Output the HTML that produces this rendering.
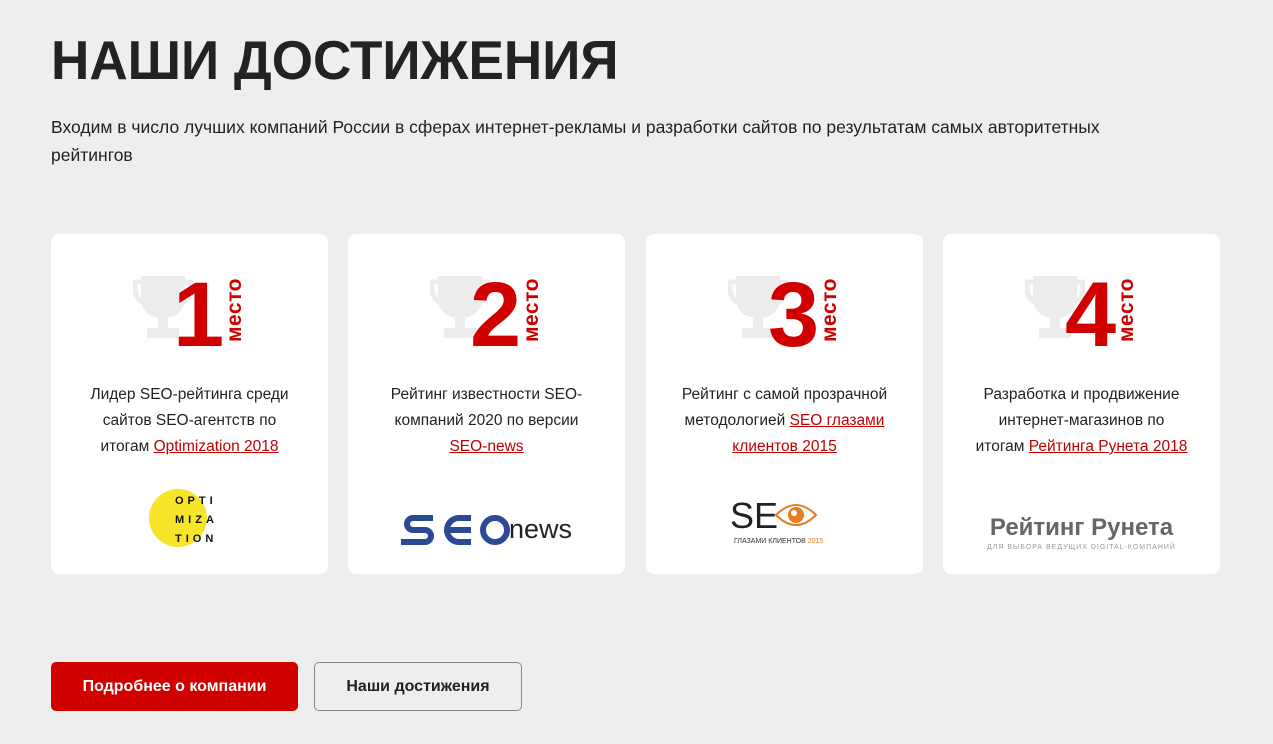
<!DOCTYPE html>
<html><head><meta charset="utf-8"><style>
body{margin:0;background:#eeeeee;font-family:"Liberation Sans",sans-serif;color:#222;width:1273px;height:744px;overflow:hidden;position:relative}
h1{position:absolute;left:51px;top:28px;margin:0;font-size:55px;font-weight:700;color:#222;transform:scaleX(0.965);transform-origin:left top;white-space:nowrap}
.sub{position:absolute;left:51px;top:113px;width:1100px;font-size:17.5px;line-height:28px}
.card{position:absolute;top:234px;width:277px;height:340px;background:#fff;border-radius:8px}
.tro{position:absolute;left:82px;top:40px}
.num{position:absolute;left:122px;top:31px;font-size:92px;font-weight:700;color:#d10000;line-height:100px;letter-spacing:-3px}
.mesto{position:absolute;left:174px;top:108px;transform:rotate(-90deg);transform-origin:left top;font-size:21px;font-weight:700;color:#d10000;line-height:20px;letter-spacing:0.5px}
.txt{position:absolute;left:32px;right:32px;top:148px;text-align:center;font-size:15.5px;line-height:26px}
.txt a{color:#c00000;text-decoration:underline}
.logo{position:absolute;left:0;right:0;top:250px;text-align:center}
.btn{position:absolute;top:662px;height:49px;border-radius:5px;font-size:16px;font-weight:700;display:flex;align-items:center;justify-content:center;box-sizing:border-box}
</style></head><body>
<h1>НАШИ ДОСТИЖЕНИЯ</h1>
<div class="sub">Входим в число лучших компаний России в сферах интернет-рекламы и разработки сайтов по результатам самых авторитетных рейтингов</div>

<svg width="0" height="0" style="position:absolute"><defs><g id="tr"><path d="M8 2h44v22c0 13-9 20-22 20S8 37 8 24z" fill="#ececec"/><path d="M8 8H2v6c0 10 6 15 12 15 M52 8h6v6c0 10-6 15-12 15" fill="none" stroke="#ececec" stroke-width="5"/><rect x="25" y="42" width="10" height="12" fill="#ececec"/><rect x="14" y="54" width="32" height="10" fill="#ececec"/></g></defs></svg>

<div class="card" style="left:51px">
<svg class="tro" width="60" height="66"><use href="#tr"/></svg>
<div class="num">1</div><div class="mesto">место</div>
<div class="txt">Лидер SEO-рейтинга среди сайтов SEO-агентств по итогам <a>Optimization 2018</a></div>
<svg style="position:absolute;left:97px;top:252px" width="90" height="62"><circle cx="30" cy="32" r="29" fill="#f7e52a"/><g font-family="Liberation Sans" font-weight="700" font-size="11" fill="#111" letter-spacing="4"><text x="27" y="18">OPTI</text><text x="27" y="37">MIZA</text><text x="27" y="56">TION</text></g></svg>
</div>

<div class="card" style="left:348px">
<svg class="tro" width="60" height="66"><use href="#tr"/></svg>
<div class="num">2</div><div class="mesto">место</div>
<div class="txt">Рейтинг известности SEO-компаний 2020 по версии <a>SEO-news</a></div>
<div class="logo" style="top:274px"><svg width="180" height="40"><g fill="none" stroke="#2c4a94" stroke-width="6"><path d="M36 10H16a6 6 0 0 0 0 12h12a6 6 0 0 1 0 12H4"/><path d="M74 10H62a12 12 0 0 0 0 24h12 M48 22h26"/><circle cx="98" cy="22" r="12"/></g><text x="112" y="30" font-family="Liberation Sans" font-size="27" fill="#222">news</text></svg></div>
</div>

<div class="card" style="left:646px">
<svg class="tro" width="60" height="66"><use href="#tr"/></svg>
<div class="num">3</div><div class="mesto">место</div>
<div class="txt">Рейтинг с самой прозрачной методологией <a>SEO глазами клиентов 2015</a></div>
<div class="logo" style="top:262px"><svg width="110" height="50"><text x="0" y="32" font-family="Liberation Sans" font-size="36" fill="#222">SE</text><path d="M46 19q20-20 40 0q-20 20-40 0z" fill="none" stroke="#e67e22" stroke-width="2"/><circle cx="66" cy="19" r="8" fill="#e67e22"/><circle cx="64" cy="17" r="3" fill="#fff"/><text x="4" y="47" font-family="Liberation Sans" font-size="7" fill="#333">ГЛАЗАМИ КЛИЕНТОВ <tspan fill="#e67e22">2015</tspan></text></svg></div>
</div>

<div class="card" style="left:943px">
<svg class="tro" width="60" height="66"><use href="#tr"/></svg>
<div class="num">4</div><div class="mesto">место</div>
<div class="txt">Разработка и продвижение интернет-магазинов по итогам <a>Рейтинга Рунета 2018</a></div>
<div class="logo" style="top:280px"><div style="font-size:24px;font-weight:700;color:#666">Рейтинг Рунета</div><div style="font-size:7px;color:#999;letter-spacing:1px;margin-top:2px">ДЛЯ ВЫБОРА ВЕДУЩИХ DIGITAL-КОМПАНИЙ</div></div>
</div>

<div class="btn" style="left:51px;width:247px;background:#d10000;color:#fff">Подробнее о компании</div>
<div class="btn" style="left:314px;width:208px;border:1px solid #888;color:#222">Наши достижения</div>
</body></html>
